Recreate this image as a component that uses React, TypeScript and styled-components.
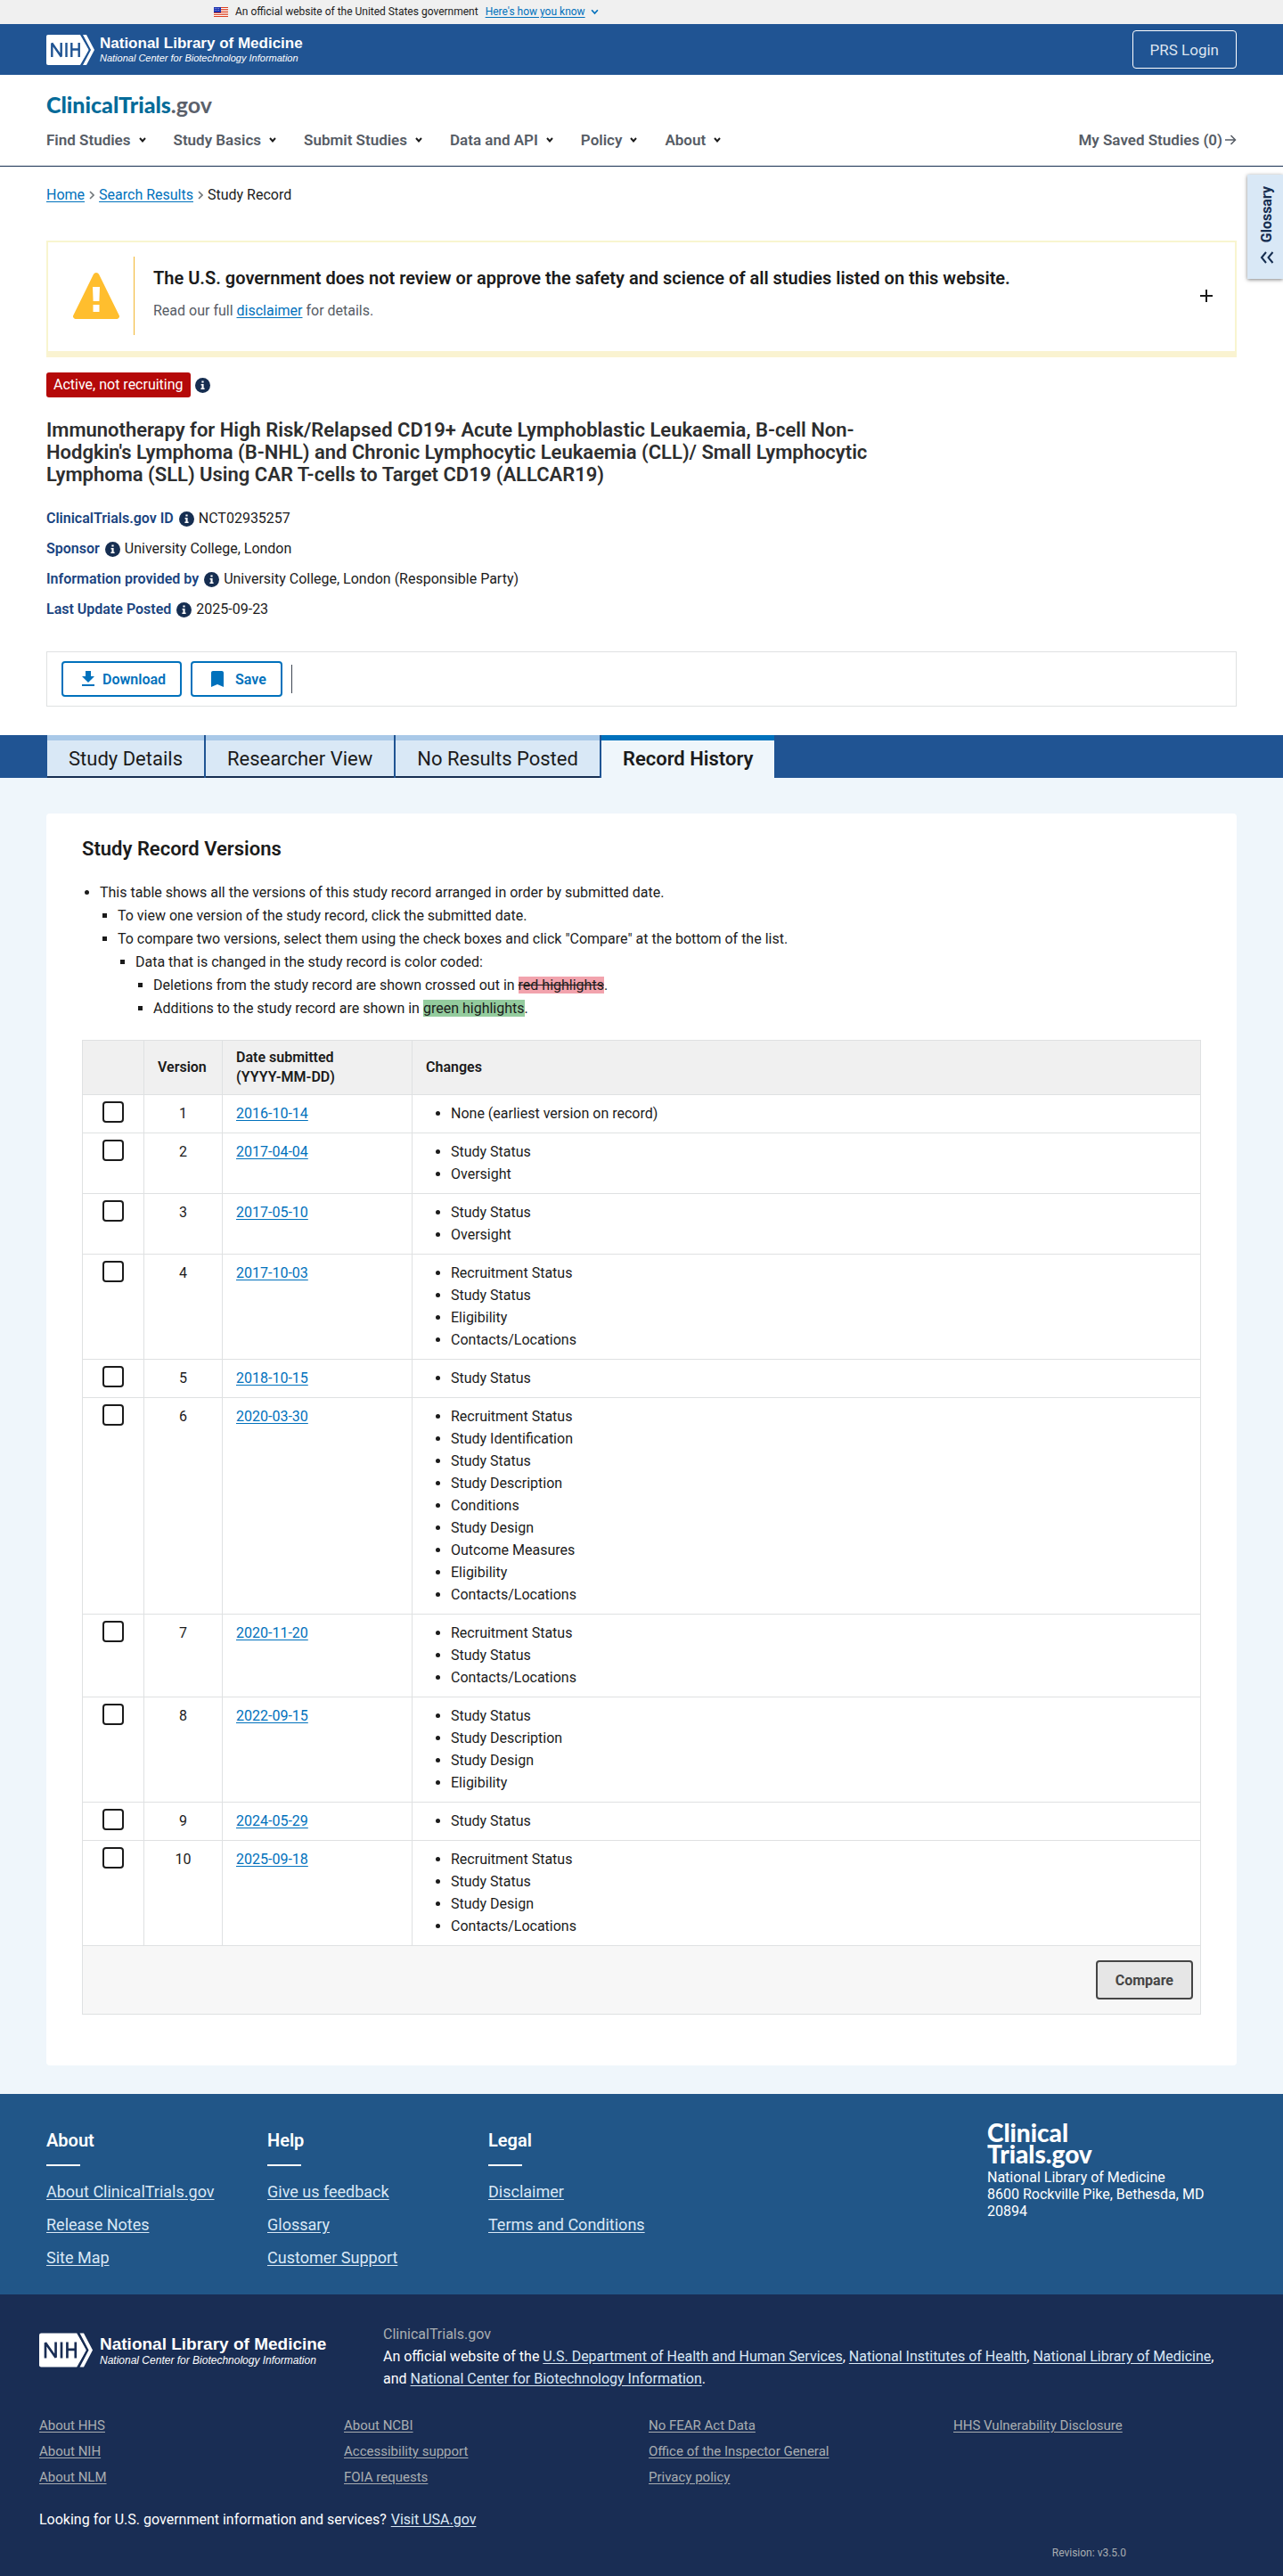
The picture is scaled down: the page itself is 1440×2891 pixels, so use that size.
import React, { useState } from "react";
import styled, { createGlobalStyle, css } from "styled-components";

const GlobalStyle = createGlobalStyle`
  *, *::before, *::after { box-sizing: border-box; }
  body {
    margin: 0;
    background: #ffffff;
    color: #1b1b1b;
    font-family: Roboto, "Liberation Sans", sans-serif;
    font-size: 16px;
    line-height: 24px;
  }
  h1, h2, h3, p, ul, dl, dd, dt { margin: 0; padding: 0; }
  button { font-family: inherit; cursor: pointer; }
  a { color: #0071bc; text-underline-offset: 2px; }
`;

/* ---------- Government banner ---------- */

const GovBanner = styled.div`
  height: 27px;
  background: #f0f0f0;
  font-size: 12px;
  line-height: 26px;
`;

const GovInner = styled.div`
  max-width: 960px;
  margin: 0 auto;
  display: flex;
  align-items: center;
`;

const GovText = styled.span`
  margin-left: 8px;
`;

const GovLink = styled.a`
  display: flex;
  align-items: center;
  gap: 6px;
  margin-left: 8px;
`;

/* ---------- Top bar ---------- */

const TopBar = styled.div`
  display: flex;
  justify-content: space-between;
  align-items: center;
  height: 57px;
  padding: 0 52px;
  background: #205493;
`;

const NlmBrand = styled.a<{ $large?: boolean }>`
  display: flex;
  align-items: center;
  gap: ${(p) => (p.$large ? 8 : 6)}px;
  color: #ffffff;
  text-decoration: none;
  font-family: "Liberation Sans", Arial, sans-serif;
  svg { width: ${(p) => (p.$large ? 60 : 54)}px; height: ${(p) => (p.$large ? 39 : 34)}px; }
`;

const NlmText = styled.span`
  display: flex;
  flex-direction: column;
  white-space: nowrap;
`;

const NlmName = styled.span<{ $large?: boolean }>`
  font-size: ${(p) => (p.$large ? 19 : 17)}px;
  line-height: ${(p) => (p.$large ? 22 : 19)}px;
  font-weight: 700;
`;

const NlmSub = styled.span<{ $large?: boolean }>`
  font-size: ${(p) => (p.$large ? 12 : 11)}px;
  line-height: 14px;
  font-style: italic;
`;

const LoginButton = styled.button`
  height: 43px;
  padding: 0 19px;
  border: 1px solid #ffffff;
  border-radius: 4px;
  background: transparent;
  color: #dce4ef;
  font-size: 17px;
`;

/* ---------- Site header ---------- */

const SiteHeader = styled.header`
  padding: 18px 52px 19px;
  border-bottom: 1px solid #162e51;
`;

const SiteLogo = styled.a`
  display: block;
  font-family: Lato, "Open Sans", sans-serif;
  font-weight: 900;
  font-size: 25px;
  line-height: 30px;
  color: #046b99;
  text-decoration: none;
  span { color: #5b616b; font-weight: 700; }
`;

const NavRow = styled.div`
  display: flex;
  justify-content: space-between;
  align-items: center;
  margin-top: 15px;
`;

const Nav = styled.nav`
  display: flex;
  gap: 31px;
`;

const NavButton = styled.button`
  display: flex;
  align-items: center;
  gap: 9px;
  padding: 0;
  border: 0;
  background: none;
  color: #565c65;
  font-size: 17px;
  line-height: 20px;
  font-weight: 600;
  svg { color: #1b1b1b; }
`;

const SavedLink = styled.a`
  display: flex;
  align-items: center;
  gap: 3px;
  color: #565c65;
  font-size: 17px;
  font-weight: 600;
  line-height: 20px;
  text-decoration: none;
`;

/* ---------- Study summary ---------- */

const Summary = styled.section`
  padding: 20px 52px 32px;
`;

const Crumbs = styled.nav`
  display: flex;
  align-items: center;
  gap: 5px;
`;

const Alert = styled.section`
  display: flex;
  align-items: center;
  margin-top: 39px;
  padding: 16px 25px 18px 28px;
  border: 2px solid #f8f5cf;
  border-bottom: 7px solid #faf3d1;
`;

const AlertBody = styled.div`
  flex: 1;
  height: 88px;
  margin-left: 16px;
  padding: 11px 0 0 21px;
  border-left: 1px solid #f2b632;
`;

const AlertTitle = styled.h2`
  font-size: 20px;
  line-height: 26px;
  font-weight: 600;
`;

const AlertText = styled.p`
  margin-top: 12px;
  color: #565c65;
`;

const PlainButton = styled.button`
  display: flex;
  padding: 0;
  border: 0;
  background: none;
  color: inherit;
`;

const StatusRow = styled.div`
  display: flex;
  align-items: center;
  gap: 5px;
  margin-top: 17px;
`;

const StatusBadge = styled.span`
  padding: 2px 8px;
  border-radius: 3px;
  background: #b50909;
  color: #ffffff;
`;

const StudyTitle = styled.h1`
  max-width: 940px;
  margin-top: 24px;
  font-size: 22px;
  line-height: 25px;
  font-weight: 600;
  color: #2d2e2f;
`;

const MetaList = styled.dl`
  display: grid;
  gap: 10px;
  margin-top: 25px;
`;

const MetaRow = styled.div`
  display: flex;
  align-items: center;
  gap: 5px;
`;

const MetaLabel = styled.dt`
  display: flex;
  align-items: center;
  gap: 6px;
  color: #1a4480;
  font-weight: 600;
`;

const Actions = styled.div`
  display: flex;
  align-items: center;
  gap: 10px;
  margin-top: 35px;
  padding: 10px 16px;
  border: 1px solid #dfe1e2;
`;

const ActionButton = styled.button<{ $gap: number }>`
  display: flex;
  align-items: center;
  gap: ${(p) => p.$gap}px;
  height: 40px;
  padding: 0 16px;
  border: 2px solid #0071bc;
  border-radius: 4px;
  background: #ffffff;
  color: #0071bc;
  font-size: 16px;
  font-weight: 600;
`;

const ActionDivider = styled.span`
  width: 1px;
  height: 32px;
  background: #3d4551;
`;

/* ---------- Tabs ---------- */

const TabBar = styled.div`
  display: flex;
  gap: 2px;
  height: 48px;
  padding: 0 53px;
  background: #205493;
`;

const Tab = styled.button<{ $active?: boolean }>`
  padding: 0 24px;
  border: 0;
  border-top: 6px solid #a9c9e8;
  border-bottom: 2px solid #162e51;
  background: #d9e8f6;
  color: #1b1b1b;
  font-size: 22px;
  ${(p) =>
    p.$active &&
    css`
      border-top-color: #0071bc;
      border-bottom-color: #eff6fb;
      background: #eff6fb;
      font-weight: 600;
    `}
`;

/* ---------- Record history ---------- */

const Panel = styled.main`
  padding: 40px 52px 32px;
  background: #eff6fb;
`;

const Card = styled.section`
  padding: 27px 40px 57px;
  border-radius: 4px;
  background: #ffffff;
`;

const CardTitle = styled.h2`
  font-size: 22px;
  line-height: 26px;
  font-weight: 600;
`;

const Notes = styled.ul<{ $nested?: boolean }>`
  margin-top: ${(p) => (p.$nested ? 0 : 23)}px;
  padding-left: 20px;
  line-height: 26px;
  list-style: ${(p) => (p.$nested ? "square" : "disc")};
`;

const Deleted = styled.del`
  background: #f2a3ad;
`;

const Added = styled.ins`
  background: #94cc9e;
  text-decoration: none;
`;

const Versions = styled.table`
  width: 100%;
  margin-top: 22px;
  border-collapse: collapse;
  table-layout: fixed;
  th, td { border: 1px solid #dfe1e2; text-align: left; }
`;

const Col = styled.col<{ $width?: number }>`
  width: ${(p) => (p.$width ? `${p.$width}px` : "auto")};
`;

const HeadCell = styled.th`
  padding: 8px 15px;
  background: #f0f0f0;
  line-height: 22px;
  font-weight: 600;
`;

const Cell = styled.td`
  padding: 8px 15px 9px;
  vertical-align: top;
  line-height: 25px;
`;

const CheckCell = styled(Cell)`
  padding-top: 7px;
  && { text-align: center; }
`;

const NumberCell = styled(Cell)`
  && { text-align: center; }
`;

const CheckBox = styled.input`
  display: block;
  appearance: none;
  width: 24px;
  height: 24px;
  margin: 0 auto;
  border: 2px solid #1b1b1b;
  border-radius: 4px;
  background: #ffffff;
  &:checked { background: #0071bc; }
`;

const ChangeList = styled.ul`
  padding-left: 28px;
`;

const FootCell = styled.td`
  padding: 16px 8px;
  background: #f7f7f7;
`;

const CompareButton = styled.button`
  display: block;
  height: 44px;
  margin-left: auto;
  padding: 0 20px;
  border: 2px solid #454545;
  border-radius: 4px;
  background: #e6e6e6;
  color: #454545;
  font-size: 16px;
  font-weight: 700;
`;

/* ---------- Footers ---------- */

const Footer = styled.footer`
  display: flex;
  padding: 31px 52px 29px;
  background: #215688;
  color: #ffffff;
`;

const FooterColumn = styled.div`
  flex: 0 0 248px;
  margin-top: 8px;
`;

const FooterTitle = styled.h3`
  font-size: 20px;
  line-height: 26px;
  font-weight: 600;
  &::after {
    content: "";
    display: block;
    width: 38px;
    height: 2px;
    margin-top: 14px;
    background: #ffffff;
  }
`;

const FooterLinks = styled.ul`
  display: grid;
  gap: 13px;
  margin-top: 17px;
  list-style: none;
  font-size: 18px;
  a { color: #d9e8f6; }
`;

const FooterBrand = styled.div`
  flex: 0 0 280px;
  margin-left: auto;
  line-height: 19px;
`;

const FooterLogo = styled.div`
  margin-bottom: 5px;
  font-family: Lato, "Open Sans", sans-serif;
  font-weight: 900;
  font-size: 28px;
  line-height: 24px;
`;

const SubFooter = styled.footer`
  padding: 32px 28px 19px 44px;
  background: #192d54;
  color: #ffffff;
`;

const SubTop = styled.div`
  display: flex;
  align-items: flex-start;
`;

const SubBrand = styled.div`
  flex: 0 0 386px;
  padding-top: 11px;
`;

const SubText = styled.p`
  max-width: 944px;
  line-height: 25px;
  a { color: #d9e8f6; }
`;

const Muted = styled.span`
  display: block;
  color: #a9aeb1;
`;

const SubLinks = styled.div`
  display: grid;
  grid-template-columns: repeat(4, 1fr);
  margin-top: 30px;
`;

const SubLinkList = styled.ul`
  display: grid;
  align-content: start;
  gap: 9px;
  list-style: none;
  font-size: 15px;
  line-height: 20px;
  a { color: #a9aeb1; }
`;

const UsaLine = styled.p`
  display: flex;
  gap: 5px;
  margin-top: 26px;
  a { color: #d9e8f6; }
`;

const Revision = styled.p`
  margin-top: 17px;
  padding-right: 148px;
  text-align: right;
  color: #a9aeb1;
  font-size: 12px;
  line-height: 16px;
`;

/* ---------- Glossary drawer handle ---------- */

const GlossaryTab = styled.button`
  position: absolute;
  top: 196px;
  right: 0;
  display: flex;
  flex-direction: column;
  align-items: center;
  gap: 10px;
  width: 40px;
  height: 117px;
  padding: 13px 0 0 4px;
  border: 0;
  background: #d9e8f6;
  box-shadow: 0 1px 4px rgba(0, 0, 0, 0.5);
  color: #162e51;
  font-size: 16px;
  font-weight: 700;
  span {
    writing-mode: vertical-rl;
    transform: rotate(180deg);
    line-height: 20px;
  }
`;

/* ---------- Drawings ---------- */

const Chevron = ({ size = 8, width = 2 }: { size?: number; width?: number }) => (
  <svg width={size} height={size} viewBox="0 0 8 8" fill="none" stroke="currentColor" strokeWidth={width}>
    <path d="M1 2l3 3.4L7 2" />
  </svg>
);

const CrumbArrow = () => (
  <svg width="6" height="10" viewBox="0 0 6 10" fill="none" stroke="#71767a" strokeWidth="1.6">
    <path d="M1 1l4 4-4 4" />
  </svg>
);

const Flag = () => (
  <svg width="16" height="11" viewBox="0 0 16 11">
    <rect width="16" height="11" fill="#ffffff" />
    {[0, 2, 4, 6, 8, 10].map((y) => (
      <rect key={y} y={y} width="16" height="1" fill="#db3e1f" />
    ))}
    <rect width="8" height="6" fill="#1e33b1" />
    <path d="M1 1.5h6M1 3.5h6" stroke="#8f9be0" strokeDasharray="1 1" />
  </svg>
);

const NihMark = ({ ink }: { ink: string }) => (
  <svg viewBox="0 0 54 34">
    <path d="M2 0h36l10 17-10 17H2a2 2 0 0 1-2-2V2a2 2 0 0 1 2-2z" fill="#ffffff" />
    <path d="M41 0h4l9 17-9 17h-4l9-17z" fill="#ffffff" />
    <g fill="none" stroke={ink} strokeWidth="2.4">
      <path d="M6.3 25V9.5L16.7 24.5V9" strokeLinejoin="bevel" />
      <path d="M22.5 9v16M28.3 9v16M28.3 16.5h8.4M36.7 9v16" />
    </g>
    <path d="M39.5 0l9 17-9 17" fill="none" stroke={ink} strokeWidth="1.6" />
  </svg>
);

const WarningIcon = () => (
  <svg width="52" height="52" viewBox="0 0 52 52">
    <path d="M23 1.8a3.4 3.4 0 0 1 6 0l22.5 45.6a3 3 0 0 1-2.8 4.6H3.3a3 3 0 0 1-2.8-4.6z" fill="#ffbe2e" />
    <path d="M22 16h8l-.6 16h-6.8zM22.5 36h7v8h-7z" fill="#ffffff" />
  </svg>
);

const PlusIcon = () => (
  <svg width="14" height="14" viewBox="0 0 14 14" stroke="currentColor" strokeWidth="2">
    <path d="M7 0v14M0 7h14" />
  </svg>
);

const InfoIcon = () => (
  <svg width="17" height="17" viewBox="0 0 17 17">
    <circle cx="8.5" cy="8.5" r="8.5" fill="#162e51" />
    <path d="M7.4 3.6h2.2v2H7.4zM6.6 7h3v4.6h1v1.4H6.4v-1.4h1.1V8.4h-.9z" fill="#ffffff" />
  </svg>
);

const DownloadIcon = () => (
  <svg width="24" height="24" viewBox="0 0 24 24" fill="currentColor">
    <path d="M19 9h-4V3H9v6H5l7 7 7-7zM5 18v2h14v-2H5z" />
  </svg>
);

const BookmarkIcon = () => (
  <svg width="24" height="24" viewBox="0 0 24 24" fill="currentColor">
    <path d="M17 3H7c-1.1 0-1.99.9-1.99 2L5 21l7-3 7 3V5c0-1.1-.9-2-2-2z" />
  </svg>
);

const ArrowRight = () => (
  <svg width="13" height="12" viewBox="0 0 13 12" fill="none" stroke="currentColor" strokeWidth="1.5">
    <path d="M0 6h11.5M6.5 1l5 5-5 5" />
  </svg>
);

const DoubleChevron = () => (
  <svg width="16" height="14" viewBox="0 0 16 14" fill="none" stroke="currentColor" strokeWidth="2">
    <path d="M7 1L2 7l5 6M14.5 1l-5 6 5 6" />
  </svg>
);

/* ---------- Data ---------- */

const navItems = ["Find Studies", "Study Basics", "Submit Studies", "Data and API", "Policy", "About"];

const meta = [
  ["ClinicalTrials.gov ID", "NCT02935257"],
  ["Sponsor", "University College, London"],
  ["Information provided by", "University College, London (Responsible Party)"],
  ["Last Update Posted", "2025-09-23"],
];

const tabs = ["Study Details", "Researcher View", "No Results Posted", "Record History"];

const versions: { date: string; changes: string[] }[] = [
  { date: "2016-10-14", changes: ["None (earliest version on record)"] },
  { date: "2017-04-04", changes: ["Study Status", "Oversight"] },
  { date: "2017-05-10", changes: ["Study Status", "Oversight"] },
  { date: "2017-10-03", changes: ["Recruitment Status", "Study Status", "Eligibility", "Contacts/Locations"] },
  { date: "2018-10-15", changes: ["Study Status"] },
  {
    date: "2020-03-30",
    changes: [
      "Recruitment Status",
      "Study Identification",
      "Study Status",
      "Study Description",
      "Conditions",
      "Study Design",
      "Outcome Measures",
      "Eligibility",
      "Contacts/Locations",
    ],
  },
  { date: "2020-11-20", changes: ["Recruitment Status", "Study Status", "Contacts/Locations"] },
  { date: "2022-09-15", changes: ["Study Status", "Study Description", "Study Design", "Eligibility"] },
  { date: "2024-05-29", changes: ["Study Status"] },
  { date: "2025-09-18", changes: ["Recruitment Status", "Study Status", "Study Design", "Contacts/Locations"] },
];

const footerColumns = [
  { title: "About", links: ["About ClinicalTrials.gov", "Release Notes", "Site Map"] },
  { title: "Help", links: ["Give us feedback", "Glossary", "Customer Support"] },
  { title: "Legal", links: ["Disclaimer", "Terms and Conditions"] },
];

const subFooterColumns = [
  ["About HHS", "About NIH", "About NLM"],
  ["About NCBI", "Accessibility support", "FOIA requests"],
  ["No FEAR Act Data", "Office of the Inspector General", "Privacy policy"],
  ["HHS Vulnerability Disclosure"],
];

const Brand = ({ ink, large }: { ink: string; large?: boolean }) => (
  <NlmBrand href="#nlm" $large={large}>
    <NihMark ink={ink} />
    <NlmText>
      <NlmName $large={large}>National Library of Medicine</NlmName>
      <NlmSub $large={large}>National Center for Biotechnology Information</NlmSub>
    </NlmText>
  </NlmBrand>
);

export default function App() {
  const [activeTab, setActiveTab] = useState("Record History");

  return (
    <>
      <GlobalStyle />
      <GovBanner>
        <GovInner>
          <Flag />
          <GovText>An official website of the United States government</GovText>
          <GovLink href="#gov">
            Here's how you know <Chevron size={9} width={1.5} />
          </GovLink>
        </GovInner>
      </GovBanner>
      <TopBar>
        <Brand ink="#205493" />
        <LoginButton type="button">PRS Login</LoginButton>
      </TopBar>
      <SiteHeader>
        <SiteLogo href="#home">
          ClinicalTrials<span>.gov</span>
        </SiteLogo>
        <NavRow>
          <Nav aria-label="Main">
            {navItems.map((item) => (
              <NavButton key={item} type="button">
                {item} <Chevron />
              </NavButton>
            ))}
          </Nav>
          <SavedLink href="#saved">
            My Saved Studies (0) <ArrowRight />
          </SavedLink>
        </NavRow>
      </SiteHeader>

      <Summary>
        <Crumbs aria-label="Breadcrumb">
          <a href="#home">Home</a>
          <CrumbArrow />
          <a href="#results">Search Results</a>
          <CrumbArrow />
          <span>Study Record</span>
        </Crumbs>

        <Alert>
          <WarningIcon />
          <AlertBody>
            <AlertTitle>
              The U.S. government does not review or approve the safety and science of all studies listed on this website.
            </AlertTitle>
            <AlertText>
              Read our full <a href="#disclaimer">disclaimer</a> for details.
            </AlertText>
          </AlertBody>
          <PlainButton type="button" aria-label="Expand notice">
            <PlusIcon />
          </PlainButton>
        </Alert>

        <StatusRow>
          <StatusBadge>Active, not recruiting</StatusBadge>
          <PlainButton type="button" aria-label="About recruitment status">
            <InfoIcon />
          </PlainButton>
        </StatusRow>
        <StudyTitle>
          Immunotherapy for High Risk/Relapsed CD19+ Acute Lymphoblastic Leukaemia, B-cell Non-Hodgkin's Lymphoma
          (B-NHL) and Chronic Lymphocytic Leukaemia (CLL)/ Small Lymphocytic Lymphoma (SLL) Using CAR T-cells to Target
          CD19 (ALLCAR19)
        </StudyTitle>
        <MetaList>
          {meta.map(([label, value]) => (
            <MetaRow key={label}>
              <MetaLabel>
                {label}
                <PlainButton type="button" aria-label={`About ${label}`}>
                  <InfoIcon />
                </PlainButton>
              </MetaLabel>
              <dd>{value}</dd>
            </MetaRow>
          ))}
        </MetaList>
        <Actions>
          <ActionButton type="button" $gap={4}>
            <DownloadIcon /> Download
          </ActionButton>
          <ActionButton type="button" $gap={8}>
            <BookmarkIcon /> Save
          </ActionButton>
          <ActionDivider />
        </Actions>
      </Summary>

      <TabBar role="tablist">
        {tabs.map((tab) => (
          <Tab
            key={tab}
            type="button"
            role="tab"
            aria-selected={tab === activeTab}
            $active={tab === activeTab}
            onClick={() => setActiveTab(tab)}
          >
            {tab}
          </Tab>
        ))}
      </TabBar>

      <Panel>
        <Card>
          <CardTitle>Study Record Versions</CardTitle>
          <Notes>
            <li>
              This table shows all the versions of this study record arranged in order by submitted date.
              <Notes $nested>
                <li>To view one version of the study record, click the submitted date.</li>
                <li>
                  To compare two versions, select them using the check boxes and click "Compare" at the bottom of the
                  list.
                  <Notes $nested>
                    <li>
                      Data that is changed in the study record is color coded:
                      <Notes $nested>
                        <li>
                          Deletions from the study record are shown crossed out in <Deleted>red highlights</Deleted>.
                        </li>
                        <li>
                          Additions to the study record are shown in <Added>green highlights</Added>.
                        </li>
                      </Notes>
                    </li>
                  </Notes>
                </li>
              </Notes>
            </li>
          </Notes>

          <Versions>
            <colgroup>
              <Col $width={69} />
              <Col $width={88} />
              <Col $width={213} />
              <Col />
            </colgroup>
            <thead>
              <tr>
                <HeadCell aria-label="Select" />
                <HeadCell>Version</HeadCell>
                <HeadCell>
                  Date submitted
                  <br />
                  (YYYY-MM-DD)
                </HeadCell>
                <HeadCell>Changes</HeadCell>
              </tr>
            </thead>
            <tbody>
              {versions.map((v, i) => (
                <tr key={v.date}>
                  <CheckCell>
                    <CheckBox type="checkbox" aria-label={`Select version ${i + 1}`} />
                  </CheckCell>
                  <NumberCell>{i + 1}</NumberCell>
                  <Cell>
                    <a href={`#v${i + 1}`}>{v.date}</a>
                  </Cell>
                  <Cell>
                    <ChangeList>
                      {v.changes.map((c) => (
                        <li key={c}>{c}</li>
                      ))}
                    </ChangeList>
                  </Cell>
                </tr>
              ))}
            </tbody>
            <tfoot>
              <tr>
                <FootCell colSpan={4}>
                  <CompareButton type="button">Compare</CompareButton>
                </FootCell>
              </tr>
            </tfoot>
          </Versions>
        </Card>
      </Panel>

      <Footer>
        {footerColumns.map((col) => (
          <FooterColumn key={col.title}>
            <FooterTitle>{col.title}</FooterTitle>
            <FooterLinks>
              {col.links.map((l) => (
                <li key={l}>
                  <a href="#footer">{l}</a>
                </li>
              ))}
            </FooterLinks>
          </FooterColumn>
        ))}
        <FooterBrand>
          <FooterLogo>
            Clinical
            <br />
            Trials.gov
          </FooterLogo>
          National Library of Medicine
          <br />
          8600 Rockville Pike, Bethesda, MD 20894
        </FooterBrand>
      </Footer>

      <SubFooter>
        <SubTop>
          <SubBrand>
            <Brand ink="#192d54" large />
          </SubBrand>
          <SubText>
            <Muted>ClinicalTrials.gov</Muted>
            An official website of the <a href="#hhs">U.S. Department of Health and Human Services</a>,{" "}
            <a href="#nih">National Institutes of Health</a>, <a href="#nlm">National Library of Medicine</a>, and{" "}
            <a href="#ncbi">National Center for Biotechnology Information</a>.
          </SubText>
        </SubTop>
        <SubLinks>
          {subFooterColumns.map((links) => (
            <SubLinkList key={links[0]}>
              {links.map((l) => (
                <li key={l}>
                  <a href="#agency">{l}</a>
                </li>
              ))}
            </SubLinkList>
          ))}
        </SubLinks>
        <UsaLine>
          Looking for U.S. government information and services? <a href="#usa">Visit USA.gov</a>
        </UsaLine>
        <Revision>Revision: v3.5.0</Revision>
      </SubFooter>

      <GlossaryTab type="button">
        <span>Glossary</span>
        <DoubleChevron />
      </GlossaryTab>
    </>
  );
}
